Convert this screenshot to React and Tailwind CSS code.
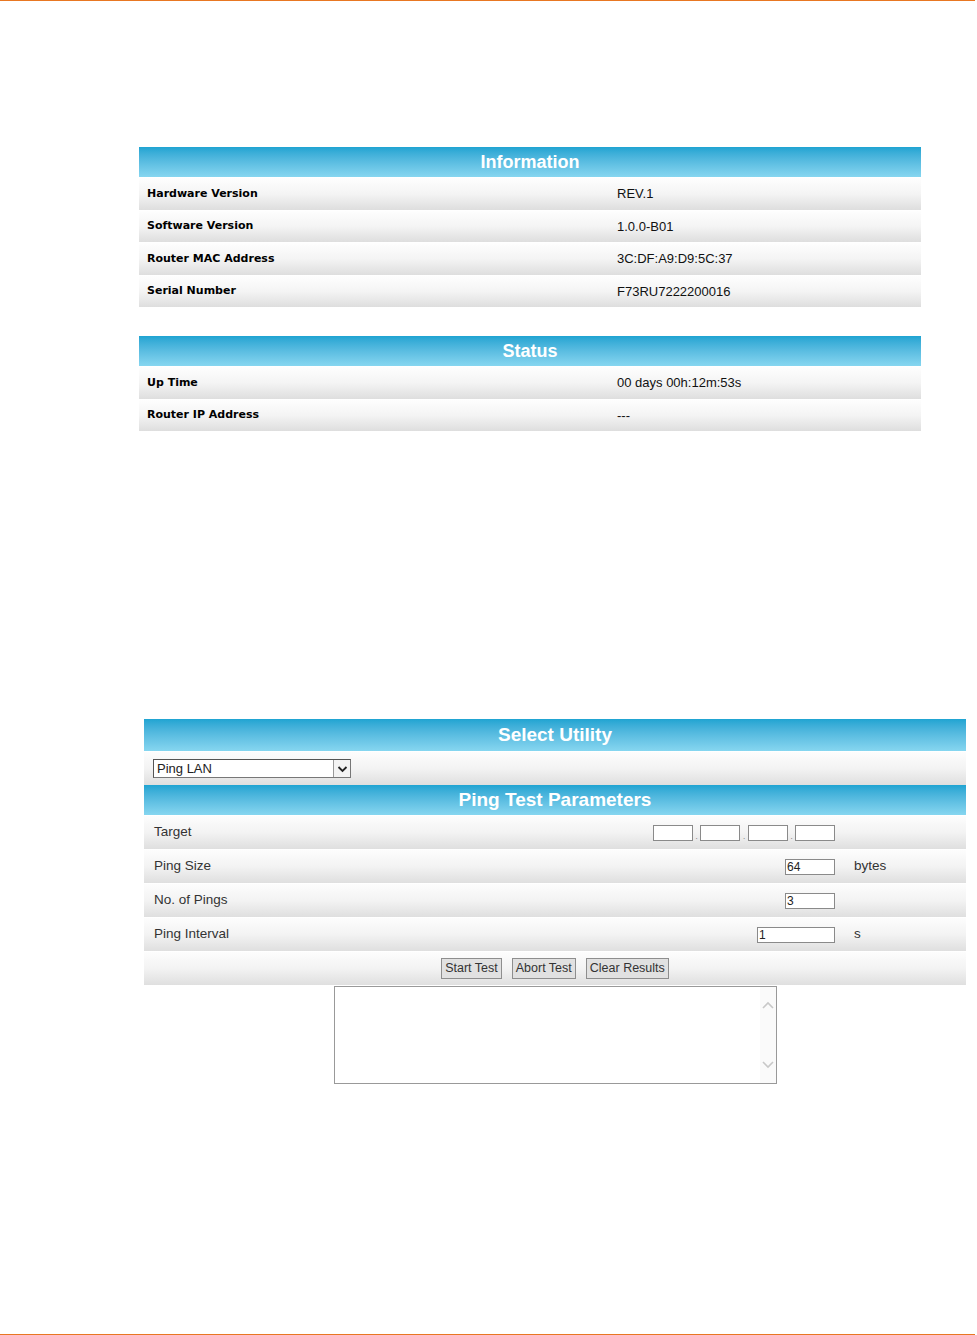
const infoRows = [
  ['Hardware Version', 'REV.1'],
  ['Software Version', '1.0.0-B01'],
  ['Router MAC Address', '3C:DF:A9:D9:5C:37'],
  ['Serial Number', 'F73RU7222200016'],
]

const statusRows = [
  ['Up Time', '00 days 00h:12m:53s'],
  ['Router IP Address', '---'],
]

function Header({ title, h = 'h-[30px]', size = 'text-[18px]' }) {
  return (
    <div className={`${h} ${size} flex items-center justify-center bg-gradient-to-b from-[#1ea4d2] to-[#86d6f0] text-white font-bold font-['Liberation_Sans',Arial,sans-serif]`}>
      {title}
    </div>
  )
}

function InfoTable({ title, rows }) {
  return (
    <div className="ml-[139px] w-[782px]">
      <Header title={title} />
      {rows.map(([label, value]) => (
        <div key={label} className="h-[32.5px] flex items-center bg-gradient-to-b from-[#fefefe] via-[#f4f4f4] to-[#dedede] border-t border-white">
          <div className="w-[478px] pl-2 font-bold text-[11px] text-black font-['DejaVu_Sans',Verdana,sans-serif]">{label}</div>
          <div className="text-[13px] text-[#111] font-['Liberation_Sans',Arial,sans-serif]">{value}</div>
        </div>
      ))}
    </div>
  )
}

function TextBox({ w, value = '' }) {
  return (
    <div className={`${w} h-[16px] bg-white border border-[#8a8a8a] text-[12px] leading-[14px] pl-px text-[#222]`}>{value}</div>
  )
}

function ParamRow({ label, children }) {
  return (
    <div className="h-[34px] flex items-center bg-gradient-to-b from-[#fdfdfd] via-[#f3f3f3] to-[#dfdfdf] border-t border-white">
      <div className="pl-[10px] flex-1 text-[13.5px] text-[#333]">{label}</div>
      {children}
    </div>
  )
}

function Btn({ children }) {
  return (
    <div className="h-[21px] px-[3px] flex items-center bg-[#e1e1e1] border border-[#8e8e8e] text-[12.5px] text-[#333]">{children}</div>
  )
}

export default function App() {
  return (
    <div className="w-[977px] h-[1335px] bg-white flex flex-col font-['Liberation_Sans',Arial,sans-serif]">
      <div className="h-px w-[975px] bg-[#e87722]" />

      <div className="mt-[146px]">
        <InfoTable title="Information" rows={infoRows} />
      </div>
      <div className="mt-[29px]">
        <InfoTable title="Status" rows={statusRows} />
      </div>

      <div className="mt-[288px] ml-[144px] w-[822px]">
        <Header title="Select Utility" h="h-[32px]" size="text-[19px]" />
        <div className="h-[34px] flex items-center bg-gradient-to-b from-[#fdfdfd] via-[#f3f3f3] to-[#dfdfdf] border-t border-white">
          <div className="ml-[9px] w-[198px] h-[19px] flex bg-white border border-[#777] border-t-[#555] border-l-[#555]">
            <div className="flex-1 pl-[3px] text-[13px] leading-[17px] text-[#222]">Ping LAN</div>
            <div className="w-[17px] h-[17px] border-l border-[#999] bg-[#f3f3f3] flex items-center justify-center">
              <svg width="11" height="8" viewBox="0 0 11 8"><path d="M1.5 2 L5.5 6 L9.5 2" fill="none" stroke="#222" strokeWidth="1.8" /></svg>
            </div>
          </div>
        </div>
        <Header title="Ping Test Parameters" size="text-[19px]" />
        <ParamRow label="Target">
          <div className="flex items-end gap-0 mr-[131px]">
            <TextBox w="w-[40px]" />
            <span className="w-[7px] text-[8px] leading-[8px] text-center text-[#666]">.</span>
            <TextBox w="w-[40px]" />
            <span className="w-[8px] text-[8px] leading-[8px] text-center text-[#666]">.</span>
            <TextBox w="w-[40px]" />
            <span className="w-[7px] text-[8px] leading-[8px] text-center text-[#666]">.</span>
            <TextBox w="w-[40px]" />
          </div>
        </ParamRow>
        <ParamRow label="Ping Size">
          <TextBox w="w-[50px]" value="64" />
          <div className="w-[131px] pl-[19px] text-[13.5px] text-[#333]">bytes</div>
        </ParamRow>
        <ParamRow label="No. of Pings">
          <TextBox w="w-[50px]" value="3" />
          <div className="w-[131px]" />
        </ParamRow>
        <ParamRow label="Ping Interval">
          <TextBox w="w-[78px]" value="1" />
          <div className="w-[131px] pl-[19px] text-[13.5px] text-[#333]">s</div>
        </ParamRow>
        <div className="h-[34px] flex items-center justify-center gap-[10px] bg-gradient-to-b from-[#fdfdfd] via-[#f3f3f3] to-[#dfdfdf] border-t border-white">
          <Btn>Start Test</Btn>
          <Btn>Abort Test</Btn>
          <Btn>Clear Results</Btn>
        </div>
      </div>

      <div className="ml-[334px] mt-px w-[443px] h-[98px] border border-[#999] bg-white flex justify-end">
        <div className="w-[16px] bg-[#fafafa] flex flex-col items-center justify-between py-[14px]">
          <svg width="12" height="8" viewBox="0 0 12 8"><path d="M1 7 L6 2 L11 7" fill="none" stroke="#c8c8c8" strokeWidth="1.6" /></svg>
          <svg width="12" height="8" viewBox="0 0 12 8"><path d="M1 1 L6 6 L11 1" fill="none" stroke="#c8c8c8" strokeWidth="1.6" /></svg>
        </div>
      </div>

      <div className="flex-1" />
      <div className="h-px w-[975px] bg-[#e87722]" />
    </div>
  )
}
